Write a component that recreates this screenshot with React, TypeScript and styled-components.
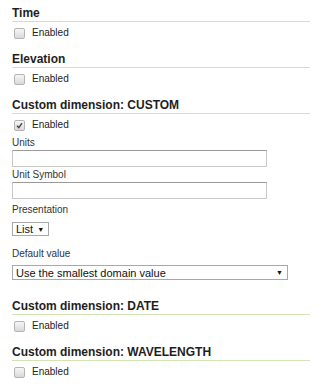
import React from 'react';
import styled, { createGlobalStyle } from 'styled-components';

const GlobalStyle = createGlobalStyle`
  html, body {
    margin: 0;
    padding: 0;
    background: #fff;
  }
  body {
    font-family: 'Liberation Sans', Arial, sans-serif;
    color: #222;
  }
`;

const Panel = styled.div`
  width: 324px;
  padding: 6px 14px 8px 12px;
  box-sizing: border-box;
`;

const Section = styled.section`
  display: flow-root;
  margin-bottom: 13px;
`;

const Heading = styled.h3`
  margin: 0;
  font-size: 12px;
  line-height: 14px;
  font-weight: bold;
  color: #1e1e1e;
  padding-bottom: 1px;
  border-bottom: 1px solid #d2e4b6;
`;

const CheckRow = styled.label`
  display: flex;
  align-items: center;
  gap: 7px;
  margin-top: 5px;
  padding-left: 2px;
  font-size: 10px;
  line-height: 12px;
  color: #222;
`;

const Box = styled.span`
  width: 9px;
  height: 9px;
  border: 1px solid #b4b4b4;
  border-radius: 2px;
  background: linear-gradient(#f6f6f6, #d9d9d9);
  display: inline-flex;
  align-items: center;
  justify-content: center;
`;

const FieldLabel = styled.div<{ $top: number }>`
  font-size: 10px;
  line-height: 12px;
  color: #333;
  margin-top: ${(p) => p.$top}px;
`;

const TextInput = styled.div`
  width: 255px;
  height: 17px;
  box-sizing: border-box;
  margin-top: 1px;
  border: 1px solid #c8c8c8;
  border-top-color: #9a9a9a;
  background: #fff;
`;

const SelectBox = styled.div<{ $wide?: boolean }>`
  display: ${(p) => (p.$wide ? 'flex' : 'inline-flex')};
  align-items: center;
  justify-content: space-between;
  gap: 4px;
  width: ${(p) => (p.$wide ? '276px' : 'auto')};
  height: ${(p) => (p.$wide ? '15px' : '14px')};
  box-sizing: border-box;
  margin-top: ${(p) => (p.$wide ? '5px' : '6px')};
  margin-bottom: ${(p) => (p.$wide ? '6px' : '0')};
  padding: 0 4px 0 3px;
  border: 1px solid #a8a8a8;
  background: #fff;
  font-size: 11px;
  color: #111;
`;

const Arrow = styled.span`
  font-size: 7px;
  color: #111;
`;

function Check({ checked }: { checked?: boolean }) {
  return (
    <Box>
      {checked && (
        <svg width="7" height="7" viewBox="0 0 7 7">
          <path d="M1 3.8 L2.8 5.6 L6 1.2" fill="none" stroke="#444" strokeWidth="1.4" />
        </svg>
      )}
    </Box>
  );
}

function Dimension({ title, checked, children }: { title: string; checked?: boolean; children?: React.ReactNode }) {
  return (
    <Section>
      <Heading>{title}</Heading>
      <CheckRow>
        <Check checked={checked} />
        Enabled
      </CheckRow>
      {children}
    </Section>
  );
}

export default function App() {
  return (
    <>
      <GlobalStyle />
      <Panel>
        <Dimension title="Time" />
        <Dimension title="Elevation" />
        <Dimension title="Custom dimension: CUSTOM" checked>
          <FieldLabel $top={6}>Units</FieldLabel>
          <TextInput />
          <FieldLabel $top={2}>Unit Symbol</FieldLabel>
          <TextInput />
          <FieldLabel $top={5}>Presentation</FieldLabel>
          <SelectBox>
            List <Arrow>▼</Arrow>
          </SelectBox>
          <FieldLabel $top={11}>Default value</FieldLabel>
          <SelectBox $wide>
            Use the smallest domain value <Arrow>▼</Arrow>
          </SelectBox>
        </Dimension>
        <Dimension title="Custom dimension: DATE" />
        <Dimension title="Custom dimension: WAVELENGTH" />
      </Panel>
    </>
  );
}
